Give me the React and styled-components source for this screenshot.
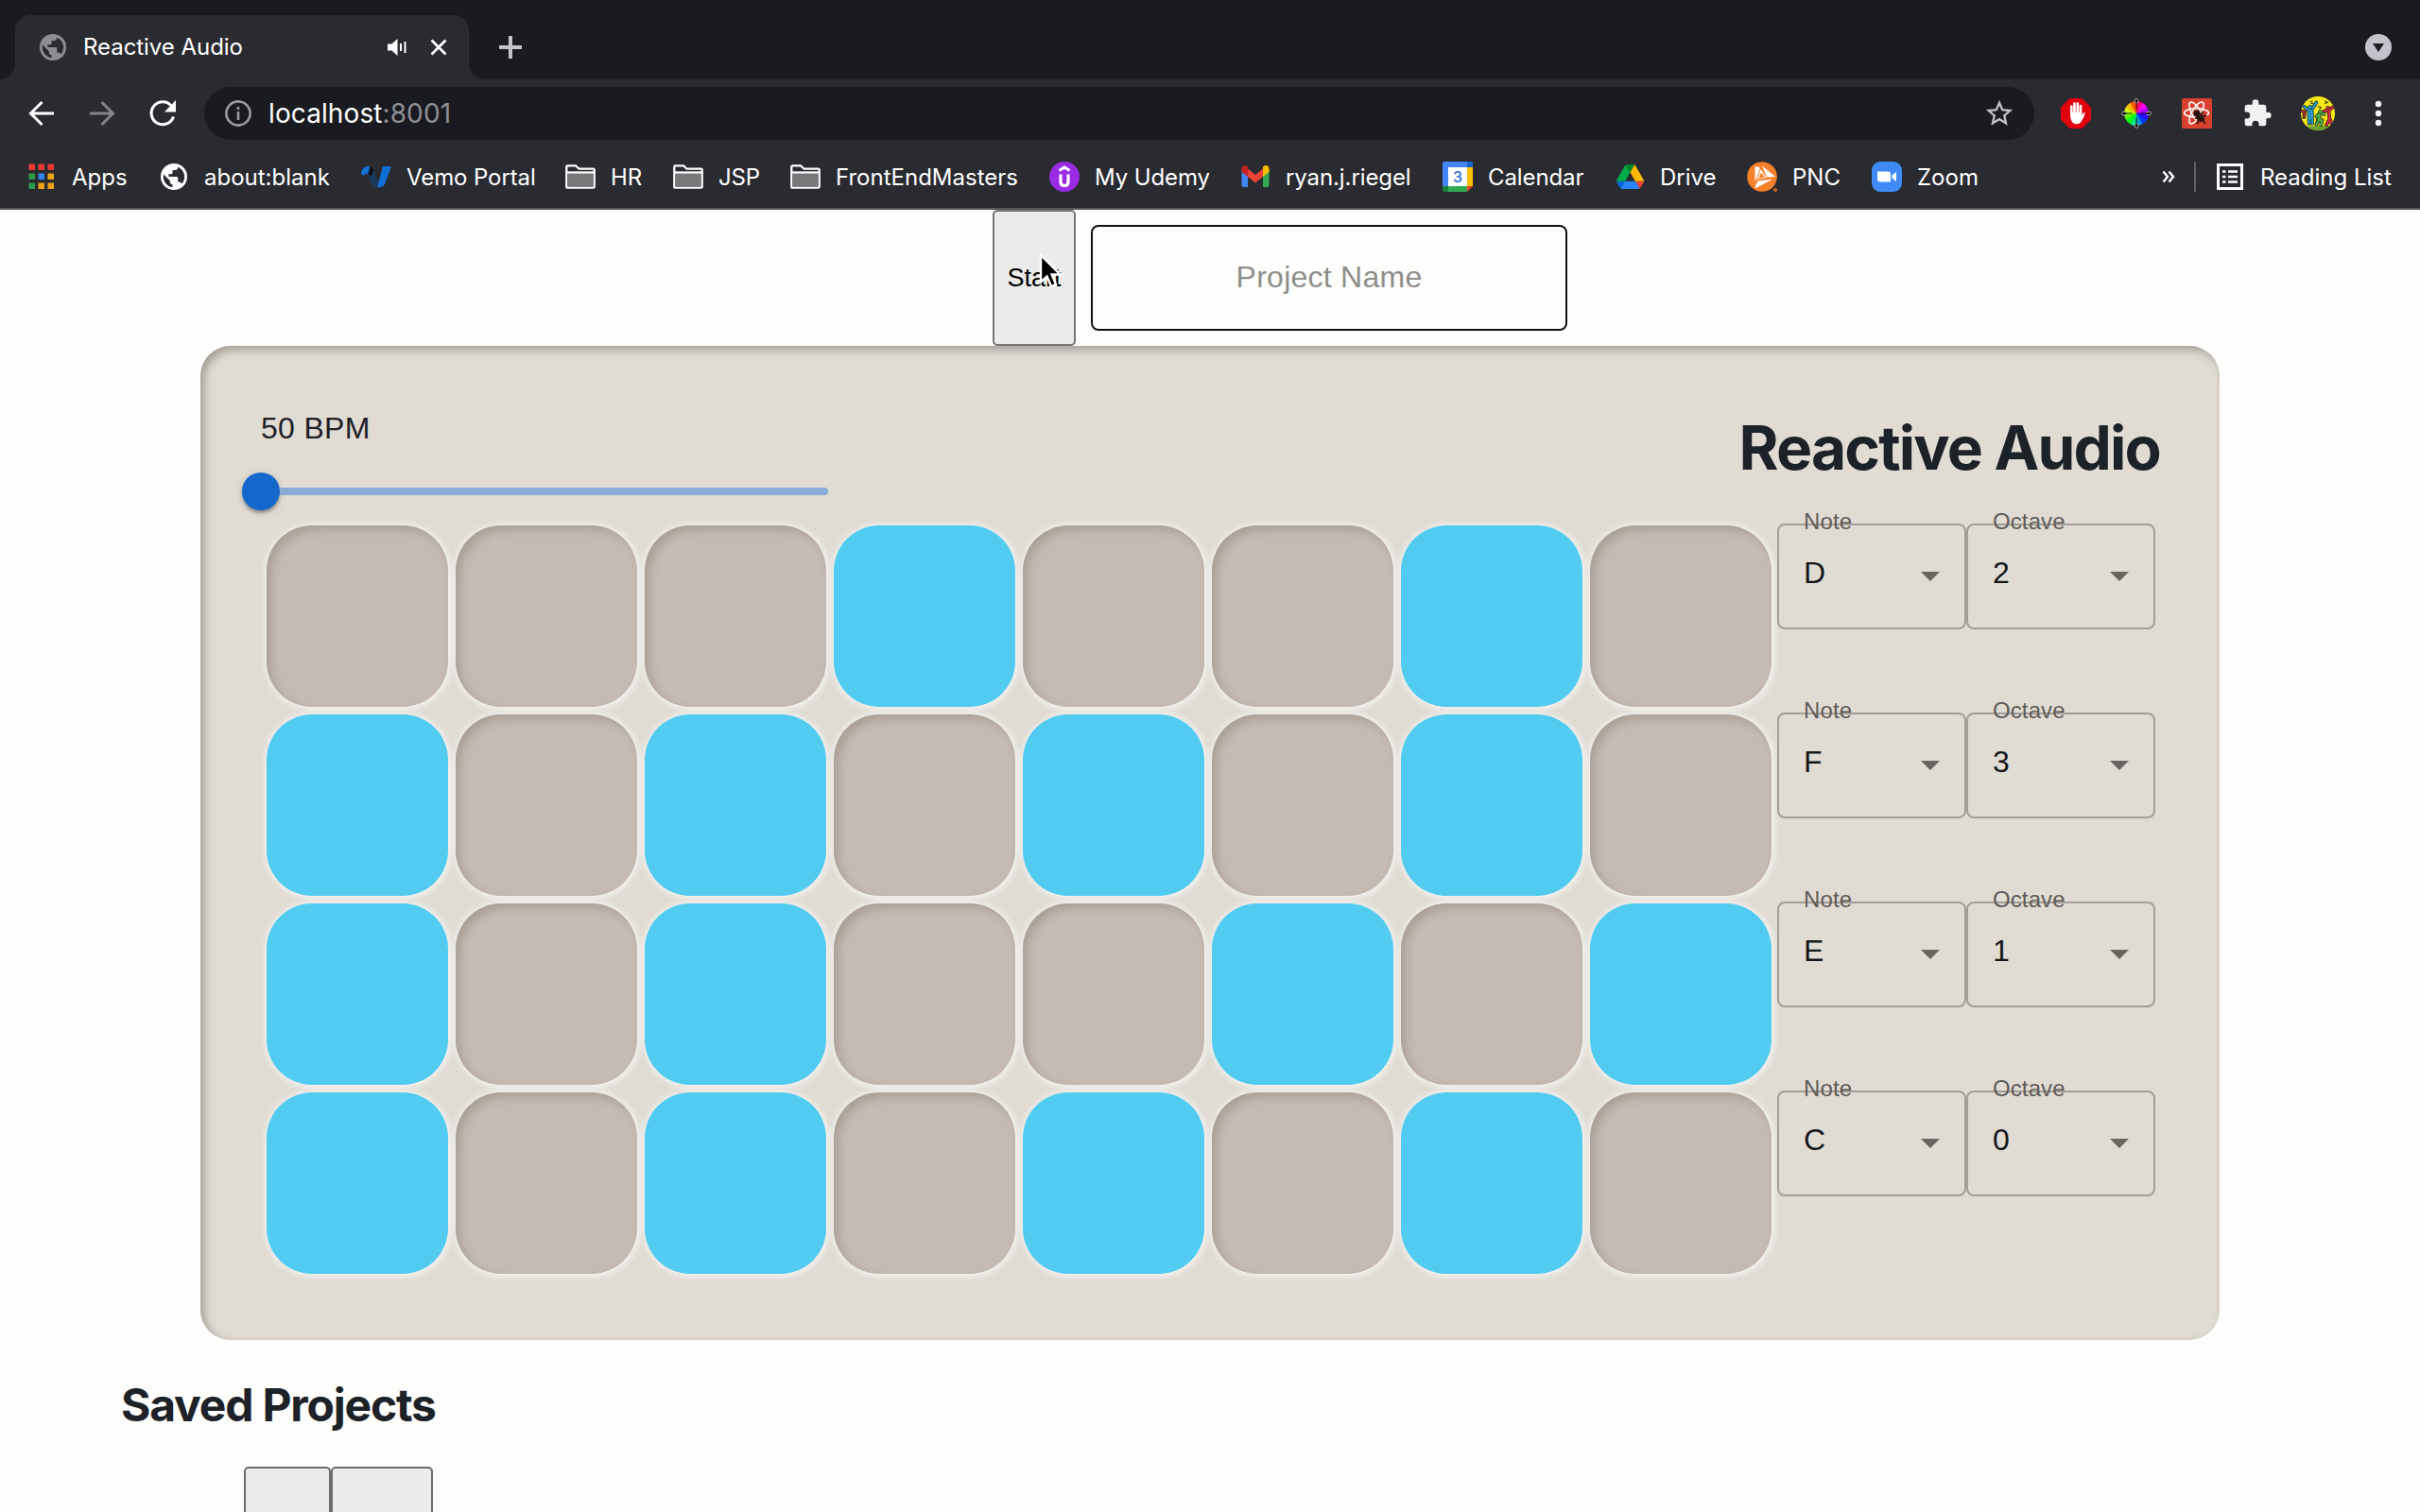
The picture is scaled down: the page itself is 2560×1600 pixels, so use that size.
import React from "react";
import styled, { createGlobalStyle } from "styled-components";

const Global = createGlobalStyle`
  * { box-sizing: border-box; }
  html, body { margin: 0; padding: 0; }
  body { background: #fdfdfc; overflow: hidden; }
`;

const UI = `Inter, "Liberation Sans", sans-serif`;
const SANS = `"Liberation Sans", Arial, sans-serif`;

const Screen = styled.div`
  width: 2560px;
  height: 1600px;
  overflow: hidden;
  display: flex;
  flex-direction: column;
  background: #fdfdfc;
  font-family: ${UI};
`;

/* ---------- browser chrome ---------- */

const TabStrip = styled.div`
  height: 84px;
  flex: none;
  display: flex;
  align-items: flex-end;
  padding: 0 26px 0 16px;
  background: #191b20;
`;

const Tab = styled.div`
  position: relative;
  width: 480px;
  height: 68px;
  display: flex;
  align-items: center;
  padding: 0 23px 0 26px;
  border-radius: 16px 16px 0 0;
  background: #2a2b30;
  color: #fff;
  &::before, &::after {
    content: "";
    position: absolute;
    bottom: 0;
    width: 16px;
    height: 16px;
  }
  &::before { left: -16px; background: radial-gradient(circle at 0 0, transparent 15.5px, #2a2b30 16px); }
  &::after { right: -16px; background: radial-gradient(circle at 100% 0, transparent 15.5px, #2a2b30 16px); }
`;

const TabTitle = styled.span`
  flex: 1;
  margin-left: 18px;
  margin-top: -1px;
  font-size: 24px;
  letter-spacing: -0.05px;
  white-space: nowrap;
`;

const TabIcons = styled.div`
  display: flex;
  align-items: center;
  gap: 24px;
`;

const NewTab = styled.div`
  height: 68px;
  margin-left: 31px;
  flex: 1;
  display: flex;
  align-items: center;
`;

const TabSearch = styled.div`
  height: 68px;
  display: flex;
  align-items: center;
  padding-right: 4px;
`;

const Toolbar = styled.div`
  height: 72px;
  flex: none;
  display: flex;
  align-items: center;
  background: #2a2b30;
`;

const NavButtons = styled.div`
  width: 216px;
  flex: none;
  display: flex;
  align-items: center;
  padding-left: 28px;
  gap: 32px;
`;

const AddressBar = styled.div`
  width: 1936px;
  flex: none;
  height: 56px;
  border-radius: 28px;
  background: #191b20;
  display: flex;
  align-items: center;
  padding: 0 20px 0 22px;
`;

const Url = styled.span`
  flex: 1;
  margin-left: 18px;
  font-size: 28px;
  letter-spacing: 0.1px;
  color: #fff;
`;

const Port = styled.span`
  color: #8f9093;
`;

const Extensions = styled.div`
  display: flex;
  align-items: center;
  margin-left: 26px;
`;

const ExtSlot = styled.div`
  width: ${(p) => p.$w || 64}px;
  flex: none;
  display: flex;
  justify-content: center;
`;

const BookmarkBar = styled.div`
  height: 66px;
  flex: none;
  display: flex;
  align-items: center;
  padding: 0 0 2px 30px;
  background: #2a2b30;
  border-bottom: 2px solid #55565a;
  color: #fff;
  font-size: 24px;
`;

const Bookmark = styled.div`
  width: ${(p) => p.$w}px;
  flex: none;
  display: flex;
  align-items: center;
  gap: ${(p) => p.$gap || 16}px;
  white-space: nowrap;
  letter-spacing: ${(p) => p.$ls || 0}px;
`;

const Divider = styled.div`
  width: 2px;
  height: 32px;
  margin: 0 22px 0 20px;
  background: #5f6064;
`;

/* ---------- page ---------- */

const Page = styled.main`
  flex: 1;
  display: flex;
  flex-direction: column;
`;

const Controls = styled.div`
  height: 144px;
  display: flex;
  align-items: center;
  justify-content: flex-start;
  padding-left: 1050px;
`;

const StartButton = styled.button`
  position: relative;
  width: 88px;
  height: 144px;
  padding: 1px 0 0;
  border: 2px solid #767676;
  border-radius: 5px;
  background: #ebebeb;
  color: #000;
  font: 27px ${SANS};
`;

const Cursor = styled.svg`
  position: absolute;
  left: 46px;
  top: 43px;
`;

const NameInput = styled.input`
  width: 504px;
  height: 112px;
  margin-left: 16px;
  padding: 0 0 2px;
  border: 2px solid #111;
  border-radius: 8px;
  background: transparent;
  text-align: center;
  font: 32px ${SANS};
  letter-spacing: 0.25px;
  outline: none;
  &::placeholder { color: #8e8e8a; opacity: 1; }
`;

const Panel = styled.section`
  width: 2136px;
  height: 1052px;
  margin-left: 212px;
  padding: 64px;
  border-radius: 32px;
  background: #e0dcd4;
  box-shadow: inset 4px 4px 10px rgba(85, 75, 68, 0.45);
  display: flex;
  flex-direction: column;
`;

const PanelHeader = styled.header`
  height: 124px;
  display: flex;
  justify-content: space-between;
`;

const Tempo = styled.div`
  width: 600px;
`;

const Bpm = styled.div`
  margin-top: 4px;
  height: 38px;
  font: 32px/38px ${SANS};
  letter-spacing: 0.3px;
  color: #1d2026;
`;

const Slider = styled.div`
  margin-top: 28px;
  height: 40px;
  display: flex;
  align-items: center;
`;

const Thumb = styled.div`
  width: 40px;
  height: 40px;
  margin-left: -20px;
  border-radius: 50%;
  background: #1468cd;
  box-shadow: 0 3px 3px rgba(0, 0, 0, 0.25), 0 2px 8px rgba(0, 0, 0, 0.16);
`;

const Track = styled.div`
  flex: 1;
  height: 8px;
  border-radius: 0 4px 4px 0;
  background: #8aadd8;
`;

const Title = styled.h1`
  margin: 0;
  padding-top: 6px;
  font: 700 64px/76px ${UI};
  letter-spacing: -1.8px;
  margin-right: -1px;
  color: #1d2128;
  white-space: nowrap;
`;

const Sequencer = styled.div`
  display: flex;
  flex-direction: column;
  margin-left: 6px;
`;

const SequencerRow = styled.div`
  display: flex;
  height: 200px;
`;

const Steps = styled.div`
  display: grid;
  grid-template-columns: repeat(8, 192px);
  column-gap: 8px;
  padding-top: 2px;
  margin-right: 6px;
`;

const Step = styled.div`
  width: 192px;
  height: 192px;
  border-radius: 48px;
  background: ${(p) => (p.$on ? "#52cbf1" : "#c5bbb3")};
  box-shadow: ${(p) =>
    p.$on
      ? "0 0 8px rgba(255,255,255,0.75), 2px 2px 8px rgba(255,255,255,0.5)"
      : "inset 5px 5px 10px rgba(120,112,98,0.36), 0 0 8px rgba(255,255,255,0.75), 2px 2px 8px rgba(255,255,255,0.5)"};
`;

const Select = styled.div`
  position: relative;
  width: 200px;
  height: 112px;
  display: flex;
  align-items: center;
  justify-content: space-between;
  padding: 0 24px 0 26px;
  border: 2px solid #a19e98;
  border-radius: 8px;
  font: 32px ${SANS};
  color: #15161a;
`;

const SelectLabel = styled.span`
  position: absolute;
  left: 26px;
  top: -18px;
  font: 24px/28px ${SANS};
  letter-spacing: 0.1px;
  color: #5e5b58;
`;

const SelectValue = styled.span`
  margin-top: -7px;
`;

const Caret = styled.span`
  width: 0;
  height: 0;
  margin-right: 2px;
  border: 10px solid transparent;
  border-top-color: #686460;
  border-bottom: 0;
`;

const SavedTitle = styled.h2`
  margin: 39px 0 0 128px;
  font: 700 48px/60px ${UI};
  letter-spacing: -1.2px;
  color: #1d2128;
`;

const SavedButtons = styled.div`
  display: flex;
  margin: 35px 0 0 258px;
`;

const SavedButton = styled.button`
  width: ${(p) => p.$w}px;
  height: 100px;
  border: 2px solid #6b6b6b;
  border-radius: 5px;
  background: #ebebea;
`;

/* ---------- icons ---------- */

const Globe = ({ color, hole }) => (
  <svg width="28" height="28" viewBox="2 2 20 20">
    <circle cx="12" cy="12" r="10" fill={color} />
    <path fill={hole} d="M11 19.93c-3.95-.49-7-3.85-7-7.93 0-.62.08-1.21.21-1.79L9 15v1c0 1.1.9 2 2 2v1.93zm6.9-2.54c-.26-.81-1-1.39-1.9-1.39h-1v-3c0-.55-.45-1-1-1H8v-2h2c.55 0 1-.45 1-1V7h2c1.1 0 2-.9 2-2v-.41c2.93 1.19 5 4.06 5 7.41 0 2.08-.8 3.97-2.1 5.39z" />
  </svg>
);

const Speaker = () => (
  <svg width="22" height="22" viewBox="0 0 22 22" fill="#fff">
    <path d="M1 7.5h4.5L11.500 2v18L5.500 14.500H1z" />
    <rect x="14" y="7" width="2" height="8" />
    <rect x="18.500" y="5" width="2" height="12" />
  </svg>
);

const Close = () => (
  <svg width="18" height="18" viewBox="0 0 18 18" stroke="#fff" strokeWidth="2.700">
    <path d="M1.500 1.500l15 15M16.500 1.500l-15 15" />
  </svg>
);

const Plus = () => (
  <svg width="26" height="26" viewBox="0 0 26 26" stroke="#c3c4cb" strokeWidth="4">
    <path d="M13 1v24M1 13h24" />
  </svg>
);

const Arrow = ({ color, flip }) => (
  <svg width="32" height="32" viewBox="0 0 32 32" fill="none" stroke={color} strokeWidth="3">
    <g transform={flip ? "translate(32 0) scale(-1 1)" : undefined}>
      <path d="M29 16H5M16.500 4L4.500 16l12 12" />
    </g>
  </svg>
);

const Reload = () => (
  <svg width="32" height="32" viewBox="0 0 32 32">
    <path d="M27.500 19.500A12 12 0 1 1 25.500 8.300" fill="none" stroke="#fff" strokeWidth="3" />
    <path d="M30 2v12.500H18z" fill="#fff" />
  </svg>
);

const Info = () => (
  <svg width="28" height="28" viewBox="0 0 28 28">
    <circle cx="14" cy="14" r="12.600" fill="none" stroke="#9b9c9f" strokeWidth="2.600" />
    <rect x="12.700" y="12" width="2.600" height="9" fill="#9b9c9f" />
    <rect x="12.700" y="7" width="2.600" height="3" fill="#9b9c9f" />
  </svg>
);

const Star = () => (
  <svg width="34" height="34" viewBox="0 0 24 24" fill="#c3c4cb">
    <path d="M22 9.240l-7.190-.62L12 2 9.190 8.630 2 9.240l5.460 4.730L5.820 21 12 17.270 18.180 21l-1.630-7.030L22 9.240zM12 15.400l-3.760 2.270 1-4.280-3.320-2.880 4.380-.38L12 6.100l1.710 4.040 4.380.38-3.320 2.880 1 4.280L12 15.400z" />
  </svg>
);

const BlockHand = () => (
  <svg width="32" height="32" viewBox="0 0 32 32">
    <path d="M9.500 0h13L32 9.500v13L22.500 32h-13L0 22.500v-13z" fill="#e2000f" />
    <g fill="none" stroke="#fff" strokeWidth="2.700" strokeLinecap="round">
      <path d="M11.300 17V8.500M14.500 16V5.700M17.800 16V5.700M21 17V8" />
    </g>
    <path d="M10 15h12.400v3.300l1.800-3q1.600-1 1.500.8-1 3.500-3 7-2 4.200-5.800 4.200-4.300 0-5.700-3.800Q10 21.500 10 18z" fill="#fff" />
  </svg>
);

const WHEEL = ["#f06", "#f0e", "#a0f", "#30f", "#03f", "#09d", "#0e8", "#0f1", "#6f0", "#cf0", "#fb0", "#f50"];
const ColorWheel = () => (
  <svg width="32" height="32" viewBox="-16 -16 32 32">
    {WHEEL.map((c, i) => (
      <path key={c} d="M0 0V-13A13 13 0 0 1 6.700 -11.140Z" fill={c} transform={"rotate(" + i * 30 + ")"} />
    ))}
    <g fill="#000" stroke="#b5b5b5" strokeWidth="1">
      <ellipse cx="0" cy="-13" rx="1.800" ry="2.500" />
      <ellipse cx="0" cy="13" rx="1.800" ry="2.500" />
      <ellipse cx="-13" cy="0" rx="2.500" ry="1.800" />
      <ellipse cx="13" cy="0" rx="2.500" ry="1.800" />
    </g>
    <path d="M0-11v7M0 11V4M-11 0h7M11 0H4" stroke="#000" strokeWidth="0.900" />
  </svg>
);

const ReactDev = () => (
  <svg width="32" height="32" viewBox="0 0 32 32">
    <rect width="32" height="32" rx="2" fill="#d8412f" />
    <g fill="none" stroke="#fff" strokeWidth="1.500">
      <ellipse cx="15.500" cy="15.500" rx="13" ry="4.700" />
      <ellipse cx="15.500" cy="15.500" rx="13" ry="4.700" transform="rotate(60 15.500 15.500)" />
      <ellipse cx="15.500" cy="15.500" rx="13" ry="4.700" transform="rotate(120 15.500 15.500)" />
    </g>
    <path d="M16 21l4-5 9 3-2 9-7 3-5-4z" fill="#d8412f" />
    <g fill="#2b1512" stroke="#2b1512" strokeWidth="1.800">
      <circle cx="16" cy="16" r="2.600" />
      <ellipse cx="19.500" cy="20.500" rx="2.600" ry="4.200" transform="rotate(-45 19.500 20.500)" />
      <path d="M14 21.500l4-2M16 27l3-5M20 18l2.500-4M22 20l4-2.500M21.500 22l3.500 5" fill="none" />
    </g>
  </svg>
);

const Puzzle = () => (
  <svg width="32" height="32" viewBox="0 0 24 24" fill="#f1f1f1">
    <path d="M20.500 11H19V7c0-1.100-.9-2-2-2h-4V3.500a2.500 2.500 0 0 0-5 0V5H4c-1.100 0-1.990.9-1.990 2v3.800H3.500a2.700 2.700 0 0 1 0 5.400H2V20c0 1.100.9 2 2 2h3.800v-1.500a2.700 2.700 0 0 1 5.400 0V22H17c1.100 0 2-.9 2-2v-4h1.500a2.500 2.500 0 0 0 0-5z" />
  </svg>
);

const Avatar = () => (
  <svg width="44" height="44" viewBox="0 0 44 44">
    <defs>
      <clipPath id="face"><circle cx="22" cy="22" r="22" /></clipPath>
    </defs>
    <g clipPath="url(#face)">
      <rect width="44" height="44" fill="#f8ea1a" />
      <path d="M0 40q22-4 44 0v4H0z" fill="#6aa52c" />
      <g fill="none" strokeLinecap="round" strokeLinejoin="round">
        <g stroke="#20241c" strokeWidth="4.600">
          <path d="M4 13l5 4h5l6-9M10.500 20v15M14.500 20v15" />
          <path d="M20 26l4-4 6 1M24 23l-1 7-3 6M24 29l3 4-1 4" />
          <path d="M30 19l6-1 5-4M36 19l1 10-4 8M37 28l3 8M1 19l4 1-1 7" />
        </g>
        <path d="M4 13l5 4h5l6-9M10.500 20v15M14.500 20v15" stroke="#2798c6" strokeWidth="3" />
        <path d="M12.500 19v8" stroke="#2798c6" strokeWidth="6" />
        <path d="M20 26l4-4 6 1M24 23l-1 7-3 6M24 29l3 4-1 4" stroke="#4db04a" strokeWidth="3" />
        <path d="M30 19l6-1 5-4M36 19l1 10-4 8M37 28l3 8" stroke="#cf2a44" strokeWidth="3" />
        <path d="M1 19l4 1-1 7" stroke="#b5301f" strokeWidth="2.600" />
        <path d="M12 7l3-1M13 9h3M31 6l4 2M31 9l4-1M22 13l4 1M24 16l2-1M20 29l1 3M28 28l2 3" stroke="#20241c" strokeWidth="1.200" />
      </g>
      <g stroke="#20241c" strokeWidth="0.800">
        <circle cx="12" cy="14" r="2.600" fill="#2798c6" />
        <circle cx="25" cy="20" r="2.400" fill="#4db04a" />
        <circle cx="35" cy="15" r="2.400" fill="#cf2a44" />
      </g>
    </g>
  </svg>
);

const Dots = () => (
  <svg width="8" height="28" viewBox="0 0 8 28" fill="#f4f4f4">
    <circle cx="4" cy="4" r="3.200" />
    <circle cx="4" cy="14" r="3.200" />
    <circle cx="4" cy="24" r="3.200" />
  </svg>
);

const TabMenu = () => (
  <svg width="28" height="28" viewBox="0 0 28 28">
    <circle cx="14" cy="14" r="14" fill="#c3c4cb" />
    <path d="M8 10h12l-6 9z" fill="#191b20" />
  </svg>
);

const APP_COLORS = ["#ea3a30", "#ea3a30", "#ea3a30", "#2c9a48", "#2f84ee", "#f0a314", "#2c9a48", "#f0a314", "#f0a314"];
const AppsGrid = () => (
  <svg width="28" height="28" viewBox="0 0 28 28">
    {APP_COLORS.map((c, i) => (
      <rect key={i} x={(i % 3) * 10 + 0.5} y={Math.floor(i / 3) * 10 + 0.5} width="6.500" height="6.500" fill={c} />
    ))}
  </svg>
);

const Vemo = () => (
  <svg width="32" height="24" viewBox="0 0 32 24">
    <path d="M0 9Q1 2 6 1h3L7 10 4.500 8 3 11z" fill="#1272d8" />
    <path d="M10 1q3 2 4 6l5 14-3 2q-4-1-6-6L7 9z" fill="#17395c" />
    <path d="M10 1q2 1 3 4l-2 6-3-1z" fill="#090d14" />
    <path d="M23 1h9l-7 19q-1.500 3-4 3h-4z" fill="#0f6fd2" />
  </svg>
);

const Folder = () => (
  <svg width="32" height="26" viewBox="0 0 32 26">
    <path d="M1.300 24V2.500q0-1.200 1.200-1.200H11l3.500 3.400h15q1.200 0 1.200 1.200V23.500q0 1.200-1.200 1.200h-27q-1.200 0-1.200-.7z" fill="#2a2b30" stroke="#fff" strokeWidth="2.300" />
    <path d="M2.500 9.500h27v14h-27z" fill="#77787a" />
    <path d="M1.500 8.500h29" stroke="#fff" strokeWidth="2.300" />
  </svg>
);

const Udemy = () => (
  <svg width="32" height="32" viewBox="0 0 32 32">
    <circle cx="16" cy="16" r="16" fill="#9a2be3" />
    <path d="M10.500 9.500L16 6l5.500 3.500" fill="none" stroke="#fff" strokeWidth="3" />
    <path d="M12 13.500v8q0 4 4 4t4-4v-8" fill="none" stroke="#fff" strokeWidth="3.200" />
  </svg>
);

const Gmail = () => (
  <svg width="32" height="24" viewBox="0 0 32 24">
    <path d="M1.500 4H8v19H3.500q-2 0-2-2z" fill="#4285f4" />
    <path d="M24 4h6.500v17q0 2-2 2H24z" fill="#34a853" />
    <path d="M8 3.500l8 6.500 8-6.500v8.500l-8 6.500L8 12z" fill="#ea4335" />
    <path d="M1.500 4q0-4 3.500-4 1.500 0 3 1.500V12L1.500 7z" fill="#c5221f" />
    <path d="M30.500 4q0-4-3.500-4-1.500 0-3 1.500V12l6.500-5z" fill="#fbbc04" />
  </svg>
);

const CalendarDay = styled.text`
  font: 500 16px ${UI};
  fill: #2a68d8;
`;

const CalendarIcon = () => (
  <svg width="32" height="32" viewBox="0 0 32 32">
    <path d="M2 0h24v6H6v20H0V2q0-2 2-2z" fill="#4285f4" />
    <path d="M26 0h4q2 0 2 2v4h-6z" fill="#1967d2" />
    <path d="M26 6h6v20h-6z" fill="#fbbc04" />
    <path d="M6 26h20v6H6z" fill="#34a853" />
    <path d="M0 26h6v6H2q-2 0-2-2z" fill="#188038" />
    <path d="M26 26h6l-6 6z" fill="#ea4335" />
    <rect x="6" y="6" width="20" height="20" fill="#fff" />
    <CalendarDay x="16" y="22" textAnchor="middle">3</CalendarDay>
  </svg>
);

const Drive = () => (
  <svg width="29" height="26" viewBox="0 0 87.300 78">
    <path d="m6.600 66.850 3.850 6.650c.8 1.400 1.950 2.500 3.300 3.300l13.750-23.800h-27.500c0 1.550.4 3.100 1.200 4.500z" fill="#0066da" />
    <path d="m43.650 25-13.750-23.800c-1.350.8-2.500 1.900-3.300 3.300l-25.400 44a9.060 9.060 0 0 0 -1.200 4.500h27.500z" fill="#00ac47" />
    <path d="m73.550 76.800c1.350-.8 2.500-1.900 3.300-3.300l1.600-2.750 7.650-13.250c.8-1.400 1.200-2.950 1.200-4.500h-27.502l5.852 11.500z" fill="#ea4335" />
    <path d="m43.650 25 13.750-23.800c-1.350-.8-2.900-1.200-4.500-1.200h-18.500c-1.600 0-3.150.45-4.500 1.200z" fill="#00832d" />
    <path d="m59.800 53h-32.300l-13.750 23.800c1.350.8 2.900 1.200 4.500 1.200h50.800c1.600 0 3.150-.45 4.500-1.200z" fill="#2684fc" />
    <path d="m73.400 26.500-12.700-22c-.8-1.400-1.950-2.500-3.300-3.300l-13.750 23.800 16.150 28h27.450c0-1.550-.4-3.100-1.200-4.500z" fill="#ffba00" />
  </svg>
);

const Pnc = () => (
  <svg width="32" height="32" viewBox="0 0 32 32">
    <circle cx="16" cy="16" r="15.800" fill="#f5802a" />
    <path d="M8.500 5l5.500 1.500-5 14.500-.5-1zM16 4.500L30 16l-9 .5zM8.500 27l3-6.500 16-2L9.500 28z" fill="#fff" />
    <path d="M14.500 8l6 9-9.500 1.500z" fill="#fff" />
    <path d="M15 11.500l4 5-6.500 1z" fill="#f5802a" />
    <circle cx="30" cy="30" r="2" fill="#c76a24" />
  </svg>
);

const ZoomIcon = () => (
  <svg width="32" height="32" viewBox="0 0 32 32">
    <rect width="32" height="32" rx="9" fill="#3f8af5" />
    <path d="M6 10.500h11q3 0 3 3v8H9q-3 0-3-3z" fill="#fff" />
    <path d="M21.500 14.500l4.500-3.500v10l-4.500-3.500z" fill="#fff" />
  </svg>
);

const More = () => (
  <svg width="14" height="14" viewBox="0 0 14 14" fill="none" stroke="#fff" strokeWidth="2.400">
    <path d="M1.500 1.500L6 7l-4.500 5.500M7.500 1.500L12 7l-4.500 5.500" />
  </svg>
);

const ReadingList = () => (
  <svg width="28" height="28" viewBox="0 0 28 28">
    <rect x="1.500" y="1.500" width="25" height="25" fill="none" stroke="#fff" strokeWidth="3" />
    <path d="M6 8.500h3.500M6 14h3.500M6 19.500h3.500M12 8.500h10M12 14h10M12 19.500h10" stroke="#fff" strokeWidth="2.400" />
  </svg>
);

const Pointer = () => (
  <Cursor width="32" height="40" viewBox="-3 -3 32 40">
    <path d="M0 0V28.500L6.500 22.500L11 33L16 31L11.600 20.500H20.500Z" fill="#000" stroke="#fff" strokeWidth="2.400" />
  </Cursor>
);

const BOOKMARKS = [
  { icon: <AppsGrid />, text: "Apps", w: 140, gap: 18 },
  { icon: <Globe color="#fff" hole="#2a2b30" />, text: "about:blank", w: 212, gap: 18 },
  { icon: <Vemo />, text: "Vemo Portal", w: 216, ls: -0.1 },
  { icon: <Folder />, text: "HR", w: 114 },
  { icon: <Folder />, text: "JSP", w: 124, ls: -0.2 },
  { icon: <Folder />, text: "FrontEndMasters", w: 274 },
  { icon: <Udemy />, text: "My Udemy", w: 202, ls: -0.1 },
  { icon: <Gmail />, text: "ryan.j.riegel", w: 214, ls: -0.1 },
  { icon: <CalendarIcon />, text: "Calendar", w: 184, ls: -0.1 },
  { icon: <Drive />, text: "Drive", w: 138, gap: 17 },
  { icon: <Pnc />, text: "PNC", w: 132 },
  { icon: <ZoomIcon />, text: "Zoom", w: 307 },
];

const ROWS = [
  { steps: "00010010", note: "D", octave: "2" },
  { steps: "10101010", note: "F", octave: "3" },
  { steps: "10100101", note: "E", octave: "1" },
  { steps: "10101010", note: "C", octave: "0" },
];

const SelectField = ({ label, value }) => (
  <Select>
    <SelectLabel>{label}</SelectLabel>
    <SelectValue>{value}</SelectValue>
    <Caret />
  </Select>
);

export default function App() {
  return (
    <Screen>
      <Global />
      <TabStrip>
        <Tab>
          <Globe color="#8d8f94" hole="#2a2b30" />
          <TabTitle>Reactive Audio</TabTitle>
          <TabIcons>
            <Speaker />
            <Close />
          </TabIcons>
        </Tab>
        <NewTab><Plus /></NewTab>
        <TabSearch><TabMenu /></TabSearch>
      </TabStrip>
      <Toolbar>
        <NavButtons>
          <Arrow color="#fff" />
          <Arrow color="#84858a" flip />
          <Reload />
        </NavButtons>
        <AddressBar>
          <Info />
          <Url>localhost<Port>:8001</Port></Url>
          <Star />
        </AddressBar>
        <Extensions>
          <ExtSlot $w={36}><BlockHand /></ExtSlot>
          <ExtSlot $w={92}><ColorWheel /></ExtSlot>
          <ExtSlot $w={36}><ReactDev /></ExtSlot>
          <ExtSlot $w={92}><Puzzle /></ExtSlot>
          <ExtSlot $w={36}><Avatar /></ExtSlot>
          <ExtSlot $w={92}><Dots /></ExtSlot>
        </Extensions>
      </Toolbar>
      <BookmarkBar>
        {BOOKMARKS.map((b) => (
          <Bookmark key={b.text} $w={b.w} $gap={b.gap} $ls={b.ls}>
            {b.icon}
            <span>{b.text}</span>
          </Bookmark>
        ))}
        <More />
        <Divider />
        <Bookmark $w={190} $gap={18}>
          <ReadingList />
          <span>Reading List</span>
        </Bookmark>
      </BookmarkBar>
      <Page>
        <Controls>
          <StartButton>
            Start
            <Pointer />
          </StartButton>
          <NameInput placeholder="Project Name" />
        </Controls>
        <Panel>
          <PanelHeader>
            <Tempo>
              <Bpm>50 BPM</Bpm>
              <Slider>
                <Thumb />
                <Track />
              </Slider>
            </Tempo>
            <Title>Reactive Audio</Title>
          </PanelHeader>
          <Sequencer>
            {ROWS.map((row) => (
              <SequencerRow key={row.note}>
                <Steps>
                  {row.steps.split("").map((s, i) => (
                    <Step key={i} $on={s === "1"} />
                  ))}
                </Steps>
                <SelectField label="Note" value={row.note} />
                <SelectField label="Octave" value={row.octave} />
              </SequencerRow>
            ))}
          </Sequencer>
        </Panel>
        <SavedTitle>Saved Projects</SavedTitle>
        <SavedButtons>
          <SavedButton $w={92} />
          <SavedButton $w={108} />
        </SavedButtons>
      </Page>
    </Screen>
  );
}
